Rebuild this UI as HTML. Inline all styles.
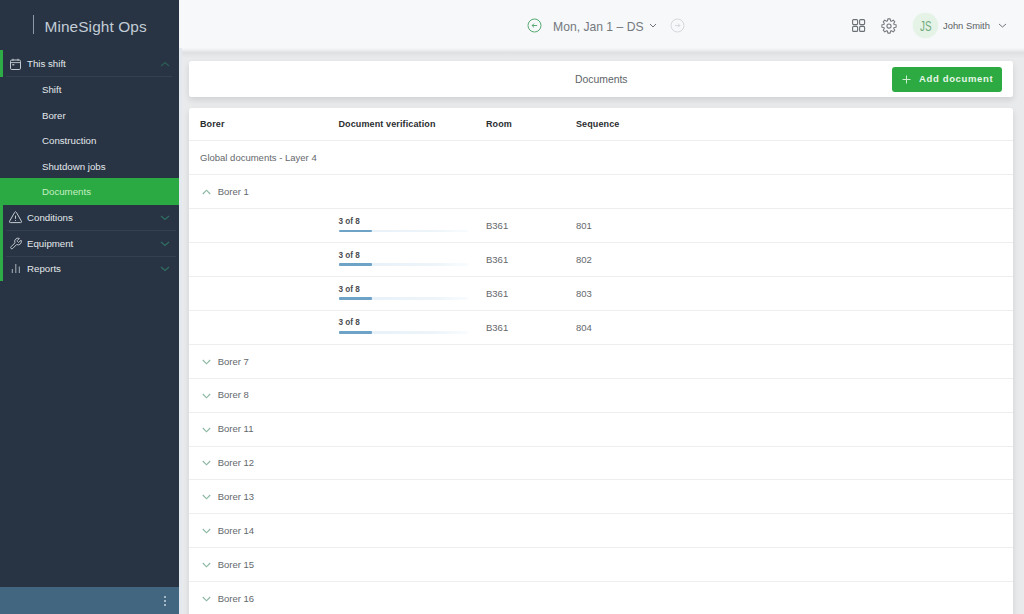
<!DOCTYPE html>
<html><head><meta charset="utf-8">
<style>
*{margin:0;padding:0;box-sizing:border-box}
html,body{width:1024px;height:614px;overflow:hidden}
body{font-family:"Liberation Sans",sans-serif;background:#e8eaec;position:relative}
.abs{position:absolute}
#side{left:0;top:0;width:179px;height:614px;background:#283443}
#logo-bar{left:33px;top:15px;width:1px;height:19px;background:#8d99a6}
#logo{left:44.5px;top:17.5px;font-size:15.4px;color:#c3ccd6;white-space:nowrap;letter-spacing:0.1px}
.gbar{background:#2eaa46;left:0;width:3px}
.sline{height:1px;background:#334050;left:6px;width:170px}
.st{font-size:9.7px;color:#e4e8ec;white-space:nowrap}
#docbg{left:0;top:178.2px;width:179px;height:26.8px;background:#2ba942}
#bottom{left:0;top:587.3px;width:179px;height:27px;background:#426580}
.dot{width:2px;height:2px;background:#c9d6e0;left:164px;border-radius:1px}
#hdr{left:179px;top:0;width:845px;height:50px;background:#f6f8fa;box-shadow:none}
.card{background:#fff;border-radius:2.5px;box-shadow:0 3px 6px rgba(0,0,0,0.11)}
.ht{font-size:13px;color:#75797e;white-space:nowrap}
.row{left:189px;width:824px;height:1px;background:#eeeeee}
.c{font-size:9.5px;line-height:9.5px;color:#64686c;white-space:nowrap}
.hb{font-size:9px;letter-spacing:0.12px;color:#2a2d30;font-weight:bold;white-space:nowrap}
.of{font-size:8.2px;line-height:8.2px;color:#4a4d51;font-weight:bold;white-space:nowrap}
.track{left:338.5px;width:129px;height:2.5px;background:linear-gradient(to right,#e6f0f8,#edf5fa 75%,rgba(237,245,250,0.3));border-radius:1px}
.fill{left:338.5px;width:33px;height:2.5px;background:#6ea2c7;border-radius:1px}
</style></head>
<body>
<div id="side" class="abs"></div>
<div id="logo-bar" class="abs"></div>
<div id="logo" class="abs">MineSight Ops</div>

<div class="abs gbar" style="top:50px;height:27px"></div>
<div class="abs sline" style="top:76px;width:166px"></div>
<svg class="abs" style="left:9px;top:58px" width="13" height="13" viewBox="0 0 13 13"><rect x="1.5" y="2" width="10" height="9.5" rx="1.3" fill="none" stroke="#c3cad2" stroke-width="1"/><line x1="1.5" y1="4.6" x2="11.5" y2="4.6" stroke="#c3cad2" stroke-width="0.9"/><line x1="4" y1="0.8" x2="4" y2="2.8" stroke="#c3cad2"/><line x1="9" y1="0.8" x2="9" y2="2.8" stroke="#c3cad2"/><rect x="3.3" y="6" width="2" height="1.4" fill="#aeb6bf"/></svg>
<div class="abs st" style="left:27px;top:58px">This shift</div>
<svg class="abs" style="left:160px;top:60.5px" width="10" height="6" viewBox="0 0 10 6"><polyline points="1,5 5,1.5 9,5" fill="none" stroke="#2d5f58" stroke-width="1.1"/></svg>

<div class="abs st" style="left:42px;top:84px">Shift</div>
<div class="abs st" style="left:42px;top:110px">Borer</div>
<div class="abs st" style="left:42px;top:135px">Construction</div>
<div class="abs st" style="left:42px;top:161px">Shutdown jobs</div>
<div id="docbg" class="abs"></div>
<div class="abs st" style="left:42px;top:186px;color:#c3efc3">Documents</div>
<div class="abs gbar" style="top:205px;height:76px"></div>

<svg class="abs" style="left:8px;top:210px" width="15" height="14" viewBox="0 0 15 14"><path d="M6.6 2.4 Q7.5 1 8.4 2.4 L13.4 11.2 Q14.1 12.6 12.5 12.6 H2.5 Q0.9 12.6 1.6 11.2 Z" fill="none" stroke="#c3cad2" stroke-width="1" stroke-linejoin="round"/><line x1="7.5" y1="5.6" x2="7.5" y2="8.8" stroke="#c3cad2" stroke-width="1"/><circle cx="7.5" cy="10.5" r="0.55" fill="#c3cad2"/></svg>
<div class="abs st" style="left:27px;top:212px">Conditions</div>
<div class="abs sline" style="top:229.6px"></div>
<svg class="abs" style="left:9px;top:236.5px" width="13.5" height="13.5" viewBox="0 0 24 24"><path d="M14.7 6.3a1 1 0 0 0 0 1.4l1.6 1.6a1 1 0 0 0 1.4 0l3.77-3.77a6 6 0 0 1-7.94 7.94l-6.91 6.91a2.12 2.12 0 0 1-3-3l6.91-6.91a6 6 0 0 1 7.94-7.94l-3.76 3.76z" fill="none" stroke="#c3cad2" stroke-width="1.7" stroke-linejoin="round"/></svg>
<div class="abs st" style="left:27px;top:238px">Equipment</div>
<div class="abs sline" style="top:256.2px"></div>
<svg class="abs" style="left:11px;top:263px" width="10" height="11" viewBox="0 0 10 11"><line x1="1.3" y1="6" x2="1.3" y2="10" stroke="#b8c0c8" stroke-width="0.9"/><line x1="4.8" y1="1" x2="4.8" y2="10" stroke="#b8c0c8" stroke-width="0.9"/><line x1="8.3" y1="3.5" x2="8.3" y2="10" stroke="#b8c0c8" stroke-width="0.9"/></svg>
<div class="abs st" style="left:27px;top:263px">Reports</div>
<svg class="abs" style="left:160px;top:215px" width="10" height="6" viewBox="0 0 10 6"><polyline points="1,1 5,4.5 9,1" fill="none" stroke="#2f7062" stroke-width="1.1"/></svg>
<svg class="abs" style="left:160px;top:240.5px" width="10" height="6" viewBox="0 0 10 6"><polyline points="1,1 5,4.5 9,1" fill="none" stroke="#2f7062" stroke-width="1.1"/></svg>
<svg class="abs" style="left:160px;top:266px" width="10" height="6" viewBox="0 0 10 6"><polyline points="1,1 5,4.5 9,1" fill="none" stroke="#2f7062" stroke-width="1.1"/></svg>

<div id="bottom" class="abs"></div>
<div class="abs dot" style="top:596px"></div>
<div class="abs dot" style="top:600px"></div>
<div class="abs dot" style="top:604px"></div>

<!-- header -->
<div id="hdr" class="abs"></div>
<div class="abs" style="left:179px;top:48px;width:845px;height:11px;background:linear-gradient(#f6f8fa 0px,#eceef0 2px,#dfe1e3 4.5px,#e1e3e5 6px,#eaecee 11px)"></div>
<svg class="abs" style="left:526.7px;top:18px" width="15" height="15" viewBox="0 0 15 15"><circle cx="7.5" cy="7.5" r="6.5" fill="none" stroke="#4fa46a" stroke-width="0.95"/><polyline points="7,5.6 5.1,7.5 7,9.4" fill="none" stroke="#4fa46a" stroke-width="0.95"/><line x1="5.1" y1="7.5" x2="10.1" y2="7.5" stroke="#4fa46a" stroke-width="0.95"/></svg>
<div class="abs ht" style="left:553px;top:19.3px;transform:scaleX(0.935);transform-origin:0 0">Mon, Jan 1 – DS</div>
<svg class="abs" style="left:649px;top:22px" width="8" height="7" viewBox="0 0 8 7"><polyline points="1,2 4,5 7,2" fill="none" stroke="#707478" stroke-width="1"/></svg>
<svg class="abs" style="left:669.6px;top:18px" width="15" height="15" viewBox="0 0 15 15"><circle cx="7.5" cy="7.5" r="6.5" fill="none" stroke="#d3d6da" stroke-width="0.95"/><polyline points="8,5.6 9.9,7.5 8,9.4" fill="none" stroke="#d3d6da" stroke-width="0.95"/><line x1="4.9" y1="7.5" x2="9.9" y2="7.5" stroke="#d3d6da" stroke-width="0.95"/></svg>

<svg class="abs" style="left:852px;top:19px" width="14" height="14" viewBox="0 0 14 14"><rect x="0.6" y="0.6" width="5" height="5" rx="1" fill="none" stroke="#6c7075" stroke-width="1.1"/><rect x="7.6" y="0.6" width="5" height="5" rx="1" fill="none" stroke="#6c7075" stroke-width="1.1"/><rect x="0.6" y="7.4" width="5" height="5" rx="1" fill="none" stroke="#6c7075" stroke-width="1.1"/><rect x="7.6" y="7.4" width="5" height="5" rx="1" fill="none" stroke="#6c7075" stroke-width="1.1"/></svg>
<svg class="abs" style="left:881.4px;top:17.7px" width="16" height="16" viewBox="0 0 16 16"><path d="M6.43 2.94 L6.85 0.89 L9.15 0.89 L9.57 2.94 L10.47 3.31 L12.22 2.16 L13.84 3.78 L12.69 5.53 L13.06 6.43 L15.11 6.85 L15.11 9.15 L13.06 9.57 L12.69 10.47 L13.84 12.22 L12.22 13.84 L10.47 12.69 L9.57 13.06 L9.15 15.11 L6.85 15.11 L6.43 13.06 L5.53 12.69 L3.78 13.84 L2.16 12.22 L3.31 10.47 L2.94 9.57 L0.89 9.15 L0.89 6.85 L2.94 6.43 L3.31 5.53 L2.16 3.78 L3.78 2.16 L5.53 3.31 Z" fill="none" stroke="#74787c" stroke-width="1.05" stroke-linejoin="round"/><circle cx="8" cy="8" r="2.1" fill="none" stroke="#74787c" stroke-width="1.05"/></svg>
<div class="abs" style="left:913px;top:13px;width:25px;height:25px;border-radius:13px;background:#e4f3e6;box-shadow:0 0 1.5px #e4f3e6"></div>
<div class="abs" style="left:919.8px;top:17.8px;font-size:14px;color:#70ab7e;white-space:nowrap;transform:scaleX(0.7);transform-origin:0 0">JS</div>
<div class="abs" style="left:943px;top:20px;font-size:9.4px;color:#5b5f63;white-space:nowrap">John Smith</div>
<svg class="abs" style="left:998px;top:22px" width="9" height="7" viewBox="0 0 9 7"><polyline points="1,2 4.5,5 8,2" fill="none" stroke="#707478" stroke-width="1"/></svg>

<div class="abs" style="left:179px;top:48px;width:2.5px;height:566px;background:#e4e9ef"></div>
<!-- title card -->
<div class="abs card" style="left:189px;top:61.4px;width:824px;height:35.8px"></div>
<div class="abs" style="left:575px;top:74px;font-size:10.4px;color:#606468;white-space:nowrap">Documents</div>
<div class="abs" style="left:892px;top:66.5px;width:110px;height:25.5px;background:#2daa42;border-radius:3px"></div>
<svg class="abs" style="left:902px;top:75px" width="9" height="9" viewBox="0 0 9 9"><line x1="4.5" y1="0.5" x2="4.5" y2="8.5" stroke="#cdeecf"/><line x1="0.5" y1="4.5" x2="8.5" y2="4.5" stroke="#cdeecf"/></svg>
<div class="abs" style="left:919px;top:73px;font-size:9.5px;font-weight:bold;color:#e8f7e8;letter-spacing:0.65px;white-space:nowrap">Add document</div>

<!-- table card -->
<div class="abs card" style="left:189px;top:107.6px;width:824px;height:520px"></div>
<div class="abs hb" style="left:200px;top:119px">Borer</div>
<div class="abs hb" style="left:338.5px;top:119px">Document verification</div>
<div class="abs hb" style="left:486px;top:119px">Room</div>
<div class="abs hb" style="left:576px;top:119px">Sequence</div>
<div id="rows">
<div class="abs row" style="top:140.40px"></div>
<div class="abs row" style="top:174.30px"></div>
<div class="abs row" style="top:208.20px"></div>
<div class="abs row" style="top:242.10px"></div>
<div class="abs row" style="top:276.00px"></div>
<div class="abs row" style="top:309.90px"></div>
<div class="abs row" style="top:343.80px"></div>
<div class="abs row" style="top:377.70px"></div>
<div class="abs row" style="top:411.60px"></div>
<div class="abs row" style="top:445.50px"></div>
<div class="abs row" style="top:479.40px"></div>
<div class="abs row" style="top:513.30px"></div>
<div class="abs row" style="top:547.20px"></div>
<div class="abs row" style="top:581.10px"></div>
<div class="abs c" style="left:200px;top:153.18px">Global documents - Layer 4</div>
<svg class="abs" style="left:201.5px;top:188.90px" width="9" height="6" viewBox="0 0 9 6"><polyline points="0.8,5 4.5,1.2 8.2,5" fill="none" stroke="#8ab8a2" stroke-width="1.15"/></svg>
<div class="abs c" style="left:217.7px;top:187.08px">Borer 1</div>
<div class="abs of" style="left:338.5px;top:217.74px">3 of 8</div>
<div class="abs track" style="top:229.50px"></div>
<div class="abs fill" style="top:229.50px"></div>
<div class="abs c" style="left:486px;top:220.98px">B361</div>
<div class="abs c" style="left:576px;top:220.98px">801</div>
<div class="abs of" style="left:338.5px;top:251.64px">3 of 8</div>
<div class="abs track" style="top:263.40px"></div>
<div class="abs fill" style="top:263.40px"></div>
<div class="abs c" style="left:486px;top:254.88px">B361</div>
<div class="abs c" style="left:576px;top:254.88px">802</div>
<div class="abs of" style="left:338.5px;top:285.54px">3 of 8</div>
<div class="abs track" style="top:297.30px"></div>
<div class="abs fill" style="top:297.30px"></div>
<div class="abs c" style="left:486px;top:288.78px">B361</div>
<div class="abs c" style="left:576px;top:288.78px">803</div>
<div class="abs of" style="left:338.5px;top:319.44px">3 of 8</div>
<div class="abs track" style="top:331.20px"></div>
<div class="abs fill" style="top:331.20px"></div>
<div class="abs c" style="left:486px;top:322.68px">B361</div>
<div class="abs c" style="left:576px;top:322.68px">804</div>
<svg class="abs" style="left:201.5px;top:358.70px" width="9" height="6" viewBox="0 0 9 6"><polyline points="0.8,1 4.5,4.8 8.2,1" fill="none" stroke="#8ab8a2" stroke-width="1.15"/></svg>
<div class="abs c" style="left:217.7px;top:356.58px">Borer 7</div>
<svg class="abs" style="left:201.5px;top:392.60px" width="9" height="6" viewBox="0 0 9 6"><polyline points="0.8,1 4.5,4.8 8.2,1" fill="none" stroke="#8ab8a2" stroke-width="1.15"/></svg>
<div class="abs c" style="left:217.7px;top:390.48px">Borer 8</div>
<svg class="abs" style="left:201.5px;top:426.50px" width="9" height="6" viewBox="0 0 9 6"><polyline points="0.8,1 4.5,4.8 8.2,1" fill="none" stroke="#8ab8a2" stroke-width="1.15"/></svg>
<div class="abs c" style="left:217.7px;top:424.38px">Borer 11</div>
<svg class="abs" style="left:201.5px;top:460.40px" width="9" height="6" viewBox="0 0 9 6"><polyline points="0.8,1 4.5,4.8 8.2,1" fill="none" stroke="#8ab8a2" stroke-width="1.15"/></svg>
<div class="abs c" style="left:217.7px;top:458.28px">Borer 12</div>
<svg class="abs" style="left:201.5px;top:494.30px" width="9" height="6" viewBox="0 0 9 6"><polyline points="0.8,1 4.5,4.8 8.2,1" fill="none" stroke="#8ab8a2" stroke-width="1.15"/></svg>
<div class="abs c" style="left:217.7px;top:492.18px">Borer 13</div>
<svg class="abs" style="left:201.5px;top:528.20px" width="9" height="6" viewBox="0 0 9 6"><polyline points="0.8,1 4.5,4.8 8.2,1" fill="none" stroke="#8ab8a2" stroke-width="1.15"/></svg>
<div class="abs c" style="left:217.7px;top:526.08px">Borer 14</div>
<svg class="abs" style="left:201.5px;top:562.10px" width="9" height="6" viewBox="0 0 9 6"><polyline points="0.8,1 4.5,4.8 8.2,1" fill="none" stroke="#8ab8a2" stroke-width="1.15"/></svg>
<div class="abs c" style="left:217.7px;top:559.98px">Borer 15</div>
<svg class="abs" style="left:201.5px;top:596.00px" width="9" height="6" viewBox="0 0 9 6"><polyline points="0.8,1 4.5,4.8 8.2,1" fill="none" stroke="#8ab8a2" stroke-width="1.15"/></svg>
<div class="abs c" style="left:217.7px;top:593.88px">Borer 16</div>
</div>
</body></html>
